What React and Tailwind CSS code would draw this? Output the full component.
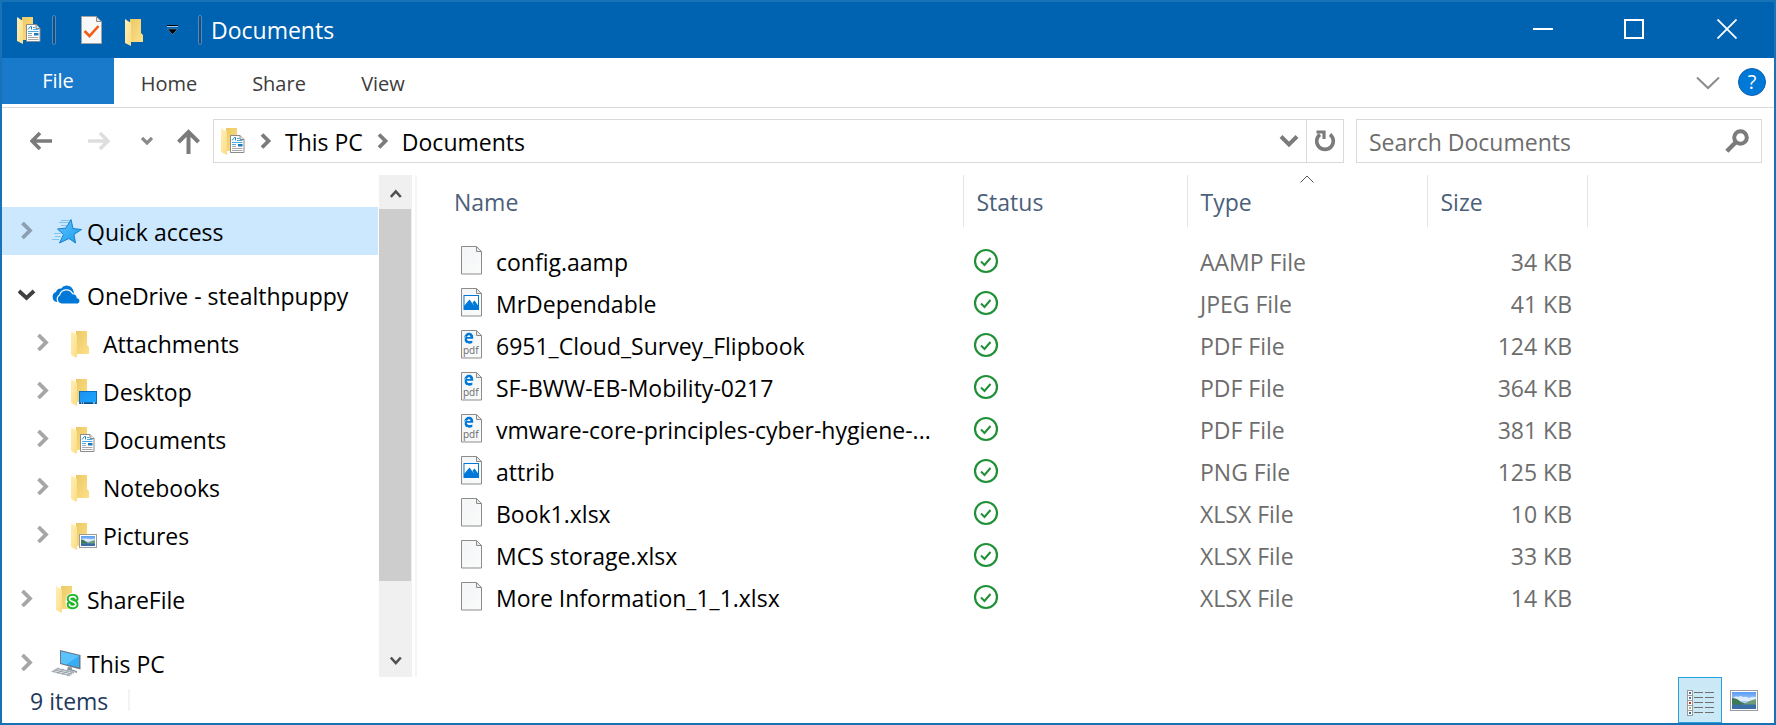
const clickable = "shrink-0 flex items-center justify-center";

function FolderShape() {
  return (
    <>
      <path d="M5 0h11v14l2 2v7H5z" fill="url(#folderBack)" />
      <path d="M0 0l6 4v23l-6-3z" fill="url(#folderFront)" />
    </>
  );
}

function DocBadge() {
  return (
    <g>
      <path d="M9.500 7.500h9.500l4 4v13h-13.500z" fill="#fff" stroke="#8a8a8a" />
      <path d="M19 7.500v4h4" fill="#e4e4e4" stroke="#8a8a8a" />
      <path d="M11 12.500l2.500-3h1v3" fill="none" stroke="#1a86d0" strokeWidth="1" />
      <path d="M16 10.500h2.500M16 12.500h5.500M11 14.500h10.500M11 16.500h4" stroke="#4aa9e4" />
      <path d="M17 16h4.500v2.500h-4.500z" fill="#1c78b8" />
      <path d="M11 18.500h4M11 20.500h10.500M11 22.500h10.500" stroke="#a8a8a8" />
    </g>
  );
}

function Landscape({ x, y, w, h }) {
  return (
    <g transform={`translate(${x} ${y})`}>
      <rect x=".5" y=".5" width={w - 1} height={h - 1} fill="#fff" stroke="#9b9b9b" />
      <svg x="2" y="2" width={w - 4} height={h - 4} viewBox="0 0 24 17" preserveAspectRatio="none">
        <rect width="24" height="17" fill="url(#sky)" />
        <path d="M1 6q3-3 5-1q3-2 5 0q4-1 6 1q3-2 7-1v4H1z" fill="#fff" opacity=".7" />
        <path d="M0 6q5 0 9 4l8 3H0z" fill="#3f7a55" />
        <path d="M12 12q6-4 12-5v6H10z" fill="#6f9c74" />
        <rect y="12.500" width="24" height="4.500" fill="#3b6ea5" />
      </svg>
    </g>
  );
}

function FolderIcon({ badge }) {
  return (
    <svg width="26" height="28" viewBox="0 -1 26 28" className="shrink-0" aria-hidden="true">
      <FolderShape />
      {badge === "doc" && <DocBadge />}
      {badge === "desktop" && (
        <g>
          <rect x="8.500" y="12.500" width="17" height="12" fill="url(#screen)" stroke="#0a6cbf" />
          <path d="M9 24h16" stroke="#06365f" />
          <path d="M10 24h1M12 24h1M22 24h2" stroke="#fff" />
        </g>
      )}
      {badge === "picture" && <Landscape x={8} y={11} w={18} h={14} />}
      {badge === "share" && (
        <g fill="none" strokeLinecap="round">
          <ellipse cx="16.500" cy="15.500" rx="7" ry="8.800" fill="#fff" />
          <path d="M19.800 12.600c-.2-2.600-6.200-2.800-6.400.3c-.1 3 6.400 2.400 6.400 5.500c0 3-6.200 2.800-6.400-.2" stroke="#1fb62a" strokeWidth="5.400" />
          <path d="M19.800 12.600c-.2-2.600-6.200-2.800-6.400.3c-.1 3 6.400 2.400 6.400 5.500c0 3-6.200 2.800-6.400-.2" stroke="#fff" strokeWidth="1.600" />
        </g>
      )}
    </svg>
  );
}

function SharedGradients() {
  return (
    <svg width="0" height="0" className="absolute" aria-hidden="true">
      <defs>
        <linearGradient id="folderBack" x1="0" y1="0" x2="1" y2="1">
          <stop offset="0" stopColor="#ecc964" />
          <stop offset="1" stopColor="#fde08a" />
        </linearGradient>
        <linearGradient id="folderFront" x1="0" y1="0" x2="1" y2="1">
          <stop offset="0" stopColor="#fff0b8" />
          <stop offset="1" stopColor="#fbdc84" />
        </linearGradient>
        <linearGradient id="sky" x1="0" y1="0" x2="0" y2="1">
          <stop offset="0" stopColor="#5b9cf5" />
          <stop offset="1" stopColor="#dff1fb" />
        </linearGradient>
        <linearGradient id="screen" x1="0" y1="0" x2="1" y2="1">
          <stop offset="0" stopColor="#1e90f2" />
          <stop offset="1" stopColor="#18a8ff" />
        </linearGradient>
        <linearGradient id="star" x1="0" y1="0" x2="1" y2="1">
          <stop offset="0" stopColor="#5cc4fb" />
          <stop offset="1" stopColor="#1a9bf0" />
        </linearGradient>
        <linearGradient id="page" x1="0" y1="0" x2="1" y2="1">
          <stop offset="0" stopColor="#f3f5f6" />
          <stop offset="1" stopColor="#fafbfb" />
        </linearGradient>
      </defs>
    </svg>
  );
}

function StarIcon() {
  return (
    <svg width="30" height="28" viewBox="0 0 30 28" className="shrink-0" aria-hidden="true">
      <path d="M9 3.500h10M7 5.500h10M9 8.500h6M2 16.500h7M3 19.500h6M0 22.500h7" stroke="#7cc3ee" strokeWidth="1" />
      <path d="M19 2.500l2 9 8.500 1-7.500 5 1.500 8.500-6.500-4.500-9.500 4.500 4-8.500-6-5.500 8.500-1z" fill="url(#star)" stroke="#1a80c8" strokeLinejoin="round" />
    </svg>
  );
}

function CloudIcon() {
  return (
    <svg width="30" height="28" viewBox="1 0 30 28" className="shrink-0 overflow-visible" aria-hidden="true">
      <path d="M6 21a5.200 5.200 0 0 1-1-10a5 5 0 0 1 5.200-3.400a6.800 6.800 0 0 1 12 1.500l1 4z" fill="#0078d7" />
      <path d="M10.500 23a4.900 4.900 0 0 1-1.800-9.100a6.900 6.900 0 0 1 12.800-1.300a4.600 4.600 0 0 1 4.800 4.100a3.300 3.300 0 0 1 .8 6.300z" fill="#0078d7" stroke="#fff" strokeWidth="1.200" />
    </svg>
  );
}

function ComputerIcon() {
  return (
    <svg width="30" height="28" viewBox="1 0 30 28" className="shrink-0 overflow-visible" aria-hidden="true">
      <path d="M9 1l20.500 5v14.500l-20.500-5.500z" fill="#6d7780" />
      <path d="M10 2.500l18 4.300v11.700l-18-4.500z" fill="#34aef6" />
      <path d="M10 2.500l18 4.300l-12.500 8.600l-5.500-1.400z" fill="#5cc2fb" />
      <path d="M17 17.500l4 1v2l5 1.500v2l-10-3z" fill="#8f989f" />
      <path d="M6 18.500l19 4.500l-6 4.500l-20-5z" fill="#dfe3e6" />
      <path d="M6 19.500l17 4M4 21l17 4M2 22.500l17 4M8 19l-7 4M13 20l-7 4.500M18 21l-7 4.500M22 22.500l-6 4.500" stroke="#8f989f" strokeWidth=".8" />
    </svg>
  );
}

function Chevron({ open, tone = "#a6a6a6" }) {
  return open ? (
    <svg width="18" height="18" viewBox="0 0 18 18" className="shrink-0" aria-hidden="true">
      <path d="M1 5l7.500 7L16 5" fill="none" stroke="#404040" strokeWidth="3.800" />
    </svg>
  ) : (
    <svg width="18" height="18" viewBox="0 0 18 18" className="shrink-0" aria-hidden="true">
      <path d="M4.500 1l7.500 7.500L4.500 16" fill="none" stroke={tone} strokeWidth="3.800" />
    </svg>
  );
}

function FileIcon({ kind }) {
  return (
    <svg width="21" height="32" viewBox="0 0 21 32" className="shrink-0" aria-hidden="true">
      <path d="M.5 .5h15l5 5v22.500h-20z" fill="url(#page)" stroke="#8c8c8c" />
      <path d="M15.500 .5v5h5z" fill="#e8e8e8" stroke="#8c8c8c" />
      {kind === "image" && (
        <g>
          <rect x="3" y="7.500" width="14.500" height="14" fill="#fff" stroke="#0078d7" />
          <path d="M3 18l5.500-6.500 4.500 6L11.500 14.500l2-2 4 5.500v4H3z" fill="#0078d7" />
        </g>
      )}
      {kind === "pdf" && (
        <g>
          <path d="M3 8.200C3.700 4.800 5.500 2.800 8 2.800c3 0 4.200 2.200 4.200 4.600v1.300H5.800c0 2.700 3.400 2.900 5.500 1.700v2.600C7.500 14.800 3.200 13 3.700 9c.2-1.300 1-2.400 2.200-3-1.400.2-2.200 1-2.900 2.200zM6.200 6.900h3.200c0-2.100-3-2-3.200 0z" fill="#0078d7" />
          <text x="2" y="24" fontSize="10" fontFamily="Open Sans, sans-serif" fill="#6a6a6a">pdf</text>
        </g>
      )}
    </svg>
  );
}

function SyncedIcon() {
  return (
    <svg width="26" height="28" viewBox="0 0 26 28" role="img" aria-label="Synced">
      <circle cx="13" cy="13" r="11" fill="none" stroke="#1f9036" strokeWidth="2.200" />
      <path d="M8 13.500l3.500 3.500 6-7" fill="none" stroke="#1f9036" strokeWidth="2" />
    </svg>
  );
}

const files = [
  ["config.aamp", "plain", "AAMP File", "34 KB"],
  ["MrDependable", "image", "JPEG File", "41 KB"],
  ["6951_Cloud_Survey_Flipbook", "pdf", "PDF File", "124 KB"],
  ["SF-BWW-EB-Mobility-0217", "pdf", "PDF File", "364 KB"],
  ["vmware-core-principles-cyber-hygiene-...", "pdf", "PDF File", "381 KB"],
  ["attrib", "image", "PNG File", "125 KB"],
  ["Book1.xlsx", "plain", "XLSX File", "10 KB"],
  ["MCS storage.xlsx", "plain", "XLSX File", "33 KB"],
  ["More Information_1_1.xlsx", "plain", "XLSX File", "14 KB"],
];

const folders = [
  ["Attachments", ""],
  ["Desktop", "desktop"],
  ["Documents", "doc"],
  ["Notebooks", ""],
  ["Pictures", "picture"],
];

function TitleBar() {
  return (
    <header className="flex h-14 shrink-0 items-center bg-[#0063b1] text-white">
      <div className="flex items-center pl-[15px]">
        <FolderIcon badge="doc" />
        <span className="ml-[9px] h-[30px] w-1 rounded-sm border border-[#4a8cc5] bg-[#1c4b78]" />
        <button aria-label="Properties" className={`${clickable} ml-[25px]`}>
          <svg width="21" height="28" viewBox="0 0 21 28">
            <path d="M.5 .5h15l5 5v22h-20z" fill="#f8f8f8" stroke="#a3a3a3" />
            <path d="M15.500 .5v5h5z" fill="#ddd" stroke="#8c8c8c" />
            <path d="M3.500 15l5 5 9-10" fill="none" stroke="#f25c16" strokeWidth="2.600" />
          </svg>
        </button>
        <button aria-label="New folder" className={`${clickable} ml-[23px] pt-1`}>
          <FolderIcon />
        </button>
        <button aria-label="Customize Quick Access Toolbar" className={`${clickable} ml-4`}>
          <svg width="11" height="10" viewBox="0 0 11 10">
            <path d="M0 .5h11" stroke="#000" />
            <path d="M0 1.500h11" stroke="#a9cbe8" />
            <path d="M.5 4h10L5.500 9.500z" fill="#000" stroke="#a9cbe8" strokeWidth=".4" />
          </svg>
        </button>
        <span className="ml-5 h-[30px] w-1 rounded-sm border border-[#4a8cc5] bg-[#1c4b78]" />
      </div>
      <h1 className="ml-[9px] flex-1 text-[23px]">Documents</h1>
      <div className="flex h-full pb-[2px]">
        <button aria-label="Minimize" className={`${clickable} w-[90px]`}>
          <svg width="20" height="20" viewBox="0 0 20 20"><path d="M0 10h20" stroke="#fff" strokeWidth="2" /></svg>
        </button>
        <button aria-label="Maximize" className={`${clickable} w-[92px]`}>
          <svg width="20" height="20" viewBox="0 0 20 20"><rect x="1" y="1" width="18" height="18" fill="none" stroke="#fff" strokeWidth="2" /></svg>
        </button>
        <button aria-label="Close" className={`${clickable} w-[94px]`}>
          <svg width="20" height="20" viewBox="0 0 20 20"><path d="M.5 .5l19 19M19.500 .5l-19 19" stroke="#fff" strokeWidth="1.800" /></svg>
        </button>
      </div>
    </header>
  );
}

function Ribbon() {
  return (
    <nav className="flex h-[50px] shrink-0 border-b border-[#dadbdc] text-xl text-[#3c3c3c]" aria-label="Ribbon">
      <button className="mb-[3px] w-28 bg-[#1979ca] text-white">File</button>
      <button className="w-[110px] pt-[2px]">Home</button>
      <button className="w-[110px] pt-[2px]">Share</button>
      <button className="w-[98px] pt-[2px]">View</button>
      <div className="flex-1" />
      <button aria-label="Expand the Ribbon" className={`${clickable} mr-[18px]`}>
        <svg width="24" height="14" viewBox="0 0 24 14"><path d="M1 1.500l11 10.500L23 1.500" fill="none" stroke="#8c8c8c" strokeWidth="2" /></svg>
      </button>
      <button aria-label="Help" className={`${clickable} mr-2 pb-[2px]`}>
        <span className="flex size-7 items-center justify-center rounded-full border border-[#0c62ad] bg-[#0078d7] text-xl font-medium text-white">?</span>
      </button>
    </nav>
  );
}

function AddressBar() {
  return (
    <div className="flex shrink-0 items-center pt-[11px] pr-3 pl-7">
      <button aria-label="Back" className={clickable}>
        <svg width="22" height="18" viewBox="0 0 22 18"><path d="M22 9H2M10 1L2 9l8 8" fill="none" stroke="#7b7b7b" strokeWidth="3.600" /></svg>
      </button>
      <button aria-label="Forward" className={`${clickable} ml-9`}>
        <svg width="22" height="18" viewBox="0 0 22 18"><path d="M0 9h20M12 1l8 8-8 8" fill="none" stroke="#dedede" strokeWidth="3.600" /></svg>
      </button>
      <button aria-label="Recent locations" className={`${clickable} ml-[31px]`}>
        <svg width="12" height="10" viewBox="0 0 12 10"><path d="M1 2l5 5 5-5" fill="none" stroke="#8a8a8a" strokeWidth="3.200" /></svg>
      </button>
      <button aria-label="Up" className={`${clickable} ml-6`}>
        <svg width="24" height="26" viewBox="0 0 24 26"><path d="M11.500 26V4M1.500 14l10-10 10 10" fill="none" stroke="#7b7b7b" strokeWidth="4" /></svg>
      </button>
      <div className="ml-3 flex h-11 flex-1 items-center border border-[#d9d9d9] pl-[7px] text-[23px]">
        <FolderIcon badge="doc" />
        <svg width="12" height="16" viewBox="0 0 12 16" className="ml-[13px]"><path d="M2 1.500L8.500 8 2 14.500" fill="none" stroke="#7b7b7b" strokeWidth="3.800" /></svg>
        <button className="ml-[13px] pt-[2px]">This PC</button>
        <svg width="12" height="16" viewBox="0 0 12 16" className="ml-[14px]"><path d="M2 1.500L8.500 8 2 14.500" fill="none" stroke="#7b7b7b" strokeWidth="3.800" /></svg>
        <button className="ml-[13px] pt-[2px]">Documents</button>
        <div className="flex-1" />
        <button aria-label="Previous locations" className={`${clickable} w-[34px]`}>
          <svg width="20" height="14" viewBox="0 0 20 14"><path d="M2 2.500l8 8 8-8" fill="none" stroke="#7b7b7b" strokeWidth="4" /></svg>
        </button>
        <button aria-label="Refresh" className={`${clickable} h-full w-[37px] border-l border-[#d9d9d9]`}>
          <svg width="22" height="24" viewBox="0 0 22 24">
            <path d="M16 5.500A8.300 8.300 0 1 1 6 5.500" fill="none" stroke="#7b7b7b" strokeWidth="3.600" />
            <path d="M2.500 3h7.500v7" fill="none" stroke="#7b7b7b" strokeWidth="3.200" />
          </svg>
        </button>
      </div>
      <label className="ml-3 flex h-11 w-[406px] items-center border border-[#d9d9d9] pr-3 pl-3">
        <input type="search" aria-label="Search Documents" placeholder="Search Documents" className="min-w-0 flex-1 pt-[2px] text-[23px] outline-none placeholder:text-[#6d6d6d]" />
        <svg width="24" height="24" viewBox="0 0 24 24" aria-hidden="true">
          <circle cx="15.500" cy="8.500" r="6.300" fill="none" stroke="#7b7b7b" strokeWidth="4" />
          <path d="M11 13L1.800 22.200" stroke="#7b7b7b" strokeWidth="4.400" />
        </svg>
      </label>
    </div>
  );
}

function TreeItem({ label, icon, nested, open, selected }) {
  return (
    <button
      aria-expanded={!!open}
      className={`flex h-12 w-full shrink-0 items-center text-left ${nested ? "pl-8" : "pl-4"} ${selected ? "bg-[#cce8ff]" : ""}`}
    >
      <Chevron open={open} tone={selected ? "#8c9fb0" : "#a6a6a6"} />
      <span className={nested ? "ml-[19px] flex w-8 pt-[2px]" : "ml-4 flex w-[35px] justify-end pr-[5px]"}>{icon}</span>
      <span className="pt-[2px] leading-6">{label}</span>
    </button>
  );
}

function Sidebar() {
  return (
    <aside className="flex w-[415px] shrink-0 border-r-2 border-[#f5f5f5] pr-[3px]">
      <div className="mr-px flex h-0 min-h-full min-w-0 flex-1 flex-col gap-4 pt-8 text-[23px]">
        <TreeItem label="Quick access" icon={<StarIcon />} selected />
        <div className="shrink-0">
          <TreeItem label="OneDrive - stealthpuppy" icon={<CloudIcon />} open />
          {folders.map(([name, badge]) => (
            <TreeItem key={name} label={name} icon={<FolderIcon badge={badge} />} nested />
          ))}
        </div>
        <TreeItem label="ShareFile" icon={<FolderIcon badge="share" />} />
        <TreeItem label="This PC" icon={<ComputerIcon />} />
      </div>
      <div className="flex w-[33px] flex-col bg-[#f0f0f0]">
        <button aria-label="Scroll up" className={`${clickable} h-[34px] pt-1`}>
          <svg width="12" height="10" viewBox="0 0 12 10"><path d="M.8 8l5-5.500 5 5.500" fill="none" stroke="#505050" strokeWidth="2.600" /></svg>
        </button>
        <div className="mr-px grow-[372] bg-[#cdcdcd]" />
        <div className="grow-[62]" />
        <button aria-label="Scroll down" className={`${clickable} h-[34px]`}>
          <svg width="12" height="10" viewBox="0 0 12 10"><path d="M.8 2.500l5 5.500 5-5.500" fill="none" stroke="#505050" strokeWidth="2.600" /></svg>
        </button>
      </div>
    </aside>
  );
}

function FileTable() {
  const head = "relative border-r border-[#e5e5e5] p-0 pt-[2px] pl-[13px] text-left font-normal";
  return (
    <main className="min-w-0 flex-1">
      <table className="w-[1170px] table-fixed border-collapse text-[23px] leading-7 text-[#6d6d6d]">
        <colgroup>
          <col className="w-[546px]" />
          <col className="w-[224px]" />
          <col className="w-[240px]" />
          <col className="w-[160px]" />
        </colgroup>
        <thead>
          <tr className="h-[52px] text-[#4c607a]">
            <th scope="col" className="border-r border-[#e5e5e5] p-0 pt-[2px] pl-[37px] text-left font-normal">Name</th>
            <th scope="col" className={head}>Status</th>
            <th scope="col" aria-sort="ascending" className={head}>
              Type
              <svg width="14" height="8" viewBox="0 0 14 8" className="absolute top-0 left-1/2 -translate-x-1/2" aria-hidden="true">
                <path d="M.5 7.500l6.500-6.500 6.500 6.500" fill="none" stroke="#555" />
              </svg>
            </th>
            <th scope="col" className={head}>Size</th>
          </tr>
        </thead>
        <tbody>
          <tr aria-hidden="true" className="h-[14px]"><td colSpan="4" className="p-0" /></tr>
          {files.map(([name, kind, type, size]) => (
            <tr key={name} className="h-[42px]">
              <td className="p-0 pl-11">
                <div className="flex items-center gap-[14px] whitespace-nowrap text-black">
                  <FileIcon kind={kind} />
                  {name}
                </div>
              </td>
              <td className="p-0 pl-[10px]"><div className="flex"><SyncedIcon /></div></td>
              <td className="p-0 pl-[13px]">{type}</td>
              <td className="p-0 pr-[15px] text-right">{size}</td>
            </tr>
          ))}
        </tbody>
      </table>
    </main>
  );
}

function StatusBar() {
  return (
    <footer className="flex h-[46px] shrink-0 items-center pr-2 pl-7 text-[23px] text-[#1e395b]">
      <span className="pt-[2px]">9 items</span>
      <span className="ml-5 h-[22px] w-[2px] bg-[#f3f3f3]" />
      <div className="flex-1" />
      <button aria-label="Details view" aria-pressed="true" className={`${clickable} h-full w-11 border border-[#26a0da] bg-[#cbe8f6] pt-1`}>
        <svg width="28" height="27" viewBox="-1 -1 28 27">
          {[0, 5, 10, 15, 20].map((y, i) => (
            <g key={y}>
              <rect x=".5" y={y + 0.5} width="5" height="5" fill="#fff" stroke="#9b9b9b" />
              <rect x="2" y={y + 2} width="2" height="2" fill={["#3c6e8f", "#5c6fa8", "#d0341f", "#a9b268", "#2f6e8f"][i]} />
              <path d={`M7 ${y + 2.5}h9M18 ${y + 2.5}h9`} stroke="#6f6f6f" />
            </g>
          ))}
        </svg>
      </button>
      <button aria-label="Large icons view" className={`${clickable} w-11`}>
        <svg width="28" height="21" viewBox="0 0 28 21"><Landscape x={0} y={0} w={28} h={21} /></svg>
      </button>
    </footer>
  );
}

export default function App() {
  return (
    <div className="flex min-h-screen flex-col border-2 border-[#1872b6] bg-white font-['Open_Sans',sans-serif] text-black">
      <SharedGradients />
      <TitleBar />
      <Ribbon />
      <AddressBar />
      <div className="mt-3 flex min-h-0 flex-1">
        <Sidebar />
        <FileTable />
      </div>
      <StatusBar />
    </div>
  );
}
